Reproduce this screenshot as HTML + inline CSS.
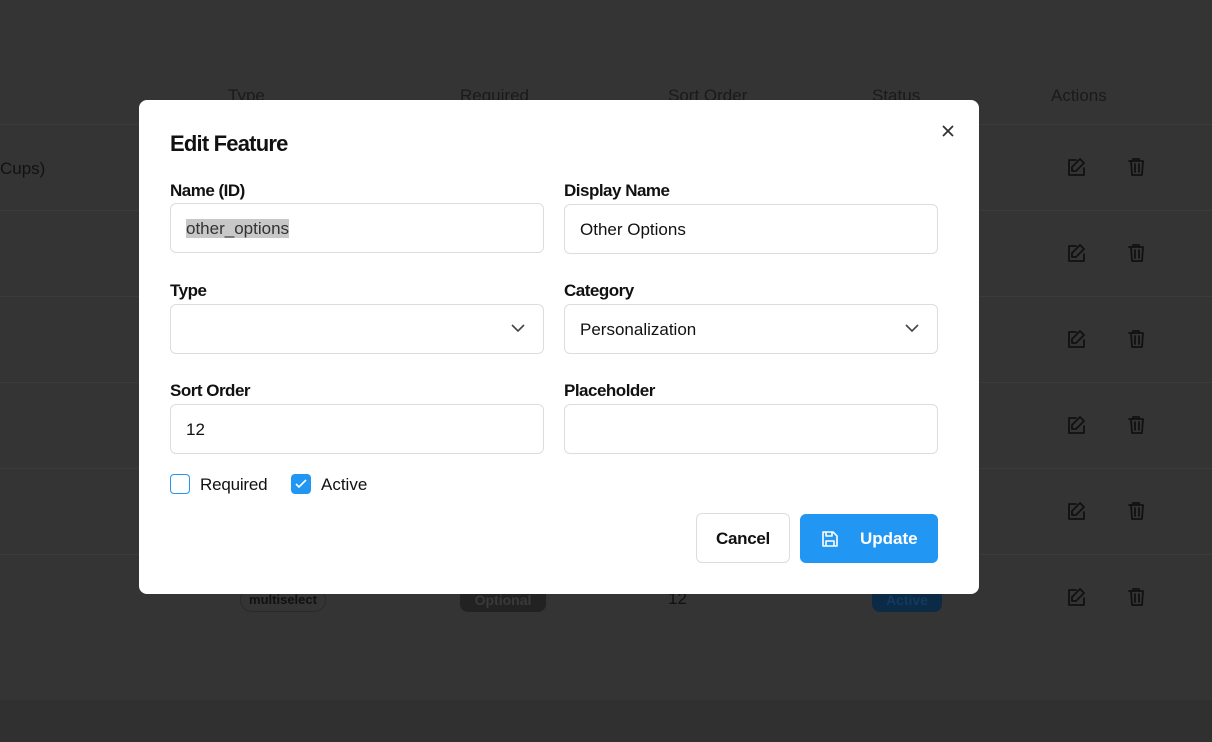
<!DOCTYPE html>
<html><head><style>
*{box-sizing:border-box;margin:0;padding:0}
body{width:1212px;height:742px;background:#343434;font-family:"Liberation Sans",sans-serif;position:relative;overflow:hidden;color:#111}
.h{position:absolute;top:86px;font-size:17px;color:#1a1a1a}
.line{position:absolute;left:0;width:1212px;height:1px;background:#3b3b3b}
.modal{position:absolute;left:139px;top:100px;width:840px;height:494px;background:#fff;border-radius:8px}
.t{position:absolute;left:31px;top:31px;font-size:22px;font-weight:bold;letter-spacing:-0.8px}
.lab{position:absolute;font-size:17px;font-weight:bold;letter-spacing:-0.5px}
.in{position:absolute;width:374px;height:50px;border:1px solid #ddd;border-radius:6px;font-size:17px;padding:15px 15px;letter-spacing:0px}
.chev{position:absolute;right:18px;top:18px}
</style></head><body>
<div class="h" style="left:228px">Type</div>
<div class="h" style="left:460px">Required</div>
<div class="h" style="left:668px">Sort Order</div>
<div class="h" style="left:872px">Status</div>
<div class="h" style="left:1051px">Actions</div>
<div class="line" style="top:124px"></div>
<div class="line" style="top:210px"></div>
<div class="line" style="top:296px"></div>
<div class="line" style="top:382px"></div>
<div class="line" style="top:468px"></div>
<div class="line" style="top:554px"></div>
<div class="line" style="top:700px;background:#303030;height:42px"></div>
<div style="position:absolute;left:0;top:159px;font-size:17px;color:#111">Cups)</div>
<div style="position:absolute;left:240px;top:588px;width:86px;height:24px;border:1px solid #2a2a2a;border-radius:12px;font-size:13px;font-weight:bold;text-align:center;line-height:22px;color:#111">multiselect</div>
<div style="position:absolute;left:460px;top:588px;width:86px;height:24px;background:#222;border-radius:8px;font-size:14px;font-weight:bold;text-align:center;line-height:24px;color:#3a3a3a">Optional</div>
<div style="position:absolute;left:668px;top:589px;font-size:17px;color:#111">12</div>
<div style="position:absolute;left:872px;top:588px;width:70px;height:24px;background:#0b2a45;border-radius:8px;font-size:14px;font-weight:bold;text-align:center;line-height:24px;color:#123a60">Active</div>
<svg width="1212" height="742" style="position:absolute;left:0;top:0" fill="none" stroke="#111" stroke-width="1.8" stroke-linecap="round" stroke-linejoin="round">
<g id="r"><path d="M1076 160h-7v15h15v-7M1080 159l4 4-8 8h-4v-4z"/><path d="M1129 161h14M1133 161v-2h6v2M1131 161l1 14h10l1-14M1135 164v8M1139 164v8"/></g>
<use href="#r" y="86"/><use href="#r" y="172"/><use href="#r" y="258"/><use href="#r" y="344"/><use href="#r" y="430"/>
</svg>
<div class="modal">
<svg style="position:absolute;left:802px;top:24px" width="14" height="14" stroke="#333" stroke-width="1.8"><path d="M2 2l10 10M12 2L2 12"/></svg>
<div class="t">Edit Feature</div>
<div class="lab" style="left:31px;top:81px">Name (ID)</div>
<div class="lab" style="left:425px;top:81px">Display Name</div>
<div class="in" style="left:31px;top:103px"><span style="background:#c8c8c8;color:#333">other_options</span></div>
<div class="in" style="left:425px;top:104px">Other Options</div>
<div class="lab" style="left:31px;top:181px">Type</div>
<div class="lab" style="left:425px;top:181px">Category</div>
<div class="in" style="left:31px;top:204px"><svg class="chev" width="14" height="10" fill="none" stroke="#444" stroke-width="1.6"><path d="M1 2l6 6 6-6"/></svg></div>
<div class="in" style="left:425px;top:204px">Personalization<svg class="chev" width="14" height="10" fill="none" stroke="#444" stroke-width="1.6"><path d="M1 2l6 6 6-6"/></svg></div>
<div class="lab" style="left:31px;top:281px">Sort Order</div>
<div class="lab" style="left:425px;top:281px">Placeholder</div>
<div class="in" style="left:31px;top:304px">12</div>
<div class="in" style="left:425px;top:304px"></div>
<div style="position:absolute;left:31px;top:374px;width:20px;height:20px;border:1.5px solid #2196f3;border-radius:4px"></div>
<div style="position:absolute;left:61px;top:375px;font-size:17px;letter-spacing:-0.2px">Required</div>
<div style="position:absolute;left:152px;top:374px;width:20px;height:20px;background:#2196f3;border-radius:4px"><svg width="20" height="20" fill="none" stroke="#fff" stroke-width="1.6"><path d="M5 10l3 3 7-7"/></svg></div>
<div style="position:absolute;left:182px;top:375px;font-size:17px">Active</div>
<div style="position:absolute;left:557px;top:413px;width:94px;height:50px;border:1px solid #ddd;border-radius:6px;font-size:17px;font-weight:bold;text-align:center;line-height:50px;letter-spacing:-0.3px">Cancel</div>
<div style="position:absolute;left:661px;top:414px;width:138px;height:49px;background:#2196f3;border-radius:6px;color:#fff;font-size:17px;font-weight:bold;line-height:50px;padding-left:60px">Update
<svg style="position:absolute;left:21px;top:16px" width="18" height="18" fill="none" stroke="#fff" stroke-width="1.6" stroke-linejoin="round"><path d="M2 2h10l4 4v10H2z M5 2v4h6V2 M5 16v-5h8v5"/></svg></div>
</div>
</body></html>
